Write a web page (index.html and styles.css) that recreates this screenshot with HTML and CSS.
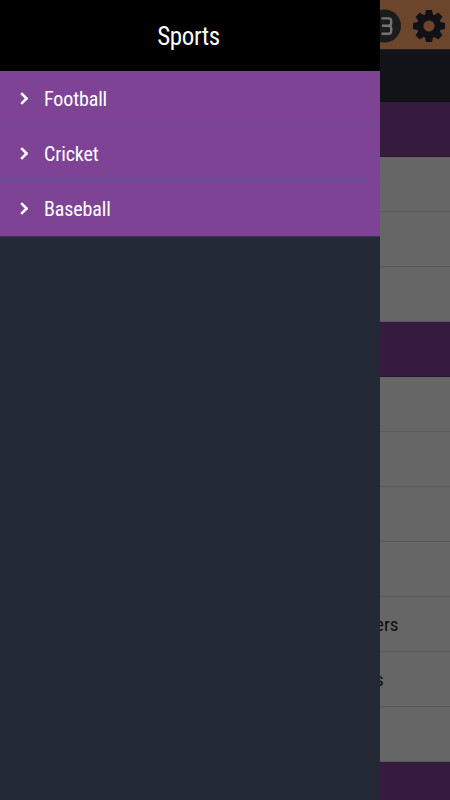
FILE: index.html
```html
<!DOCTYPE html>
<html lang="en">
<head>
<meta charset="utf-8">
<title>Sports</title>
<link rel="stylesheet" href="styles.css">
</head>
<body>
<div class="app">
  <nav class="drawer">
    <header class="title"><span>Sports</span></header>
    <ul class="menu">
      <li><svg viewBox="0 0 8 14"><path d="M1.2 1.2 6.6 6.5 1.2 11.8"/></svg><span>Football</span></li>
      <li><svg viewBox="0 0 8 14"><path d="M1.2 1.2 6.6 6.5 1.2 11.8"/></svg><span>Cricket</span></li>
      <li><svg viewBox="0 0 8 14"><path d="M1.2 1.2 6.6 6.5 1.2 11.8"/></svg><span>Baseball</span></li>
    </ul>
  </nav>
  <main class="page">
    <div class="toolbar">
      <svg class="coin" viewBox="0 0 22 36"><circle cx="4.5" cy="18" r="16.5" fill="#1b1b1b"/><path d="M1.5 10.4H8.5Q11.2 10.4 11.2 13V15Q11.2 17.7 8.5 17.7H2M8.5 17.7Q11.2 17.7 11.2 20.4V23Q11.2 25.8 8.5 25.8H1.5" fill="none" stroke="#747474" stroke-width="2.4"/></svg>
      <svg class="gear" viewBox="-17 -17 34 34">
        <g fill="#101116">
          <path id="tooth" d="M-4.3 -10 -3 -16H3L4.3 -10V10L3 16H-3L-4.3 10Z"/>
          <use href="#tooth" transform="rotate(45)"/>
          <use href="#tooth" transform="rotate(90)"/>
          <use href="#tooth" transform="rotate(135)"/>
          <circle r="12"/>
        </g>
        <circle r="5.6" fill="#6b462c"/>
      </svg>
    </div>
    <div class="subbar"></div>
    <div class="section"></div>
    <div class="row"></div>
    <div class="row"></div>
    <div class="row last"></div>
    <div class="section"></div>
    <div class="row"></div>
    <div class="row"></div>
    <div class="row"></div>
    <div class="row"></div>
    <div class="row"><span class="ers">ers</span></div>
    <div class="row"><span class="s">s</span></div>
    <div class="row last"></div>
    <div class="section"></div>
  </main>
</div>
</body>
</html>
```
FILE: styles.css
```css
* { box-sizing: border-box; }
body { margin: 0; font-family: "Roboto Condensed", Roboto, sans-serif; font-stretch: 75%; }
.app { display: flex; width: 450px; height: 800px; overflow: hidden; }
.drawer { width: 380px; background: #242936; color: #fff; }
.title { display: flex; align-items: center; justify-content: center; height: 71px; padding: 1px 3px 0 0; background: #000; font-size: 25px; letter-spacing: -0.4px; }
.menu { margin: 0; padding: 0; list-style: none; border-bottom: 1px solid #3f3557; }
.menu li { display: flex; align-items: center; height: 55px; padding: 1px 0 0 20px; background: #7e4395; border-bottom: 1px solid #6c4d98; font-size: 20px; letter-spacing: -0.12px; }
.menu li:last-child { border-bottom-color: #7e4395; }
.menu svg { width: 8px; height: 14px; margin-right: 16px; fill: none; stroke: #fff; stroke-width: 2.5; }
.page { width: 70px; overflow: hidden; background: #666; color: #0c0c0c; }
.toolbar { display: flex; align-items: center; height: 49px; padding-top: 2px; background: #6b462c; }
.coin { width: 22px; height: 36px; }
.gear { width: 34px; height: 34px; margin-left: 10px; }
.subbar { height: 53px; background: #121319; border-top: 1px solid #2a201f; }
.section { height: 55px; background: #351c3f; border-top: 1px solid #301a38; border-bottom: 1px solid #29182f; }
.row { display: flex; align-items: center; height: 55px; overflow: hidden; border-bottom: 1px solid #5b5b5b; font-size: 19px; padding-top: 1px; }
.row.last { border-bottom-color: #5e5962; }
.ers { margin-left: -5px; }
.s { margin-left: -5px; }
```
